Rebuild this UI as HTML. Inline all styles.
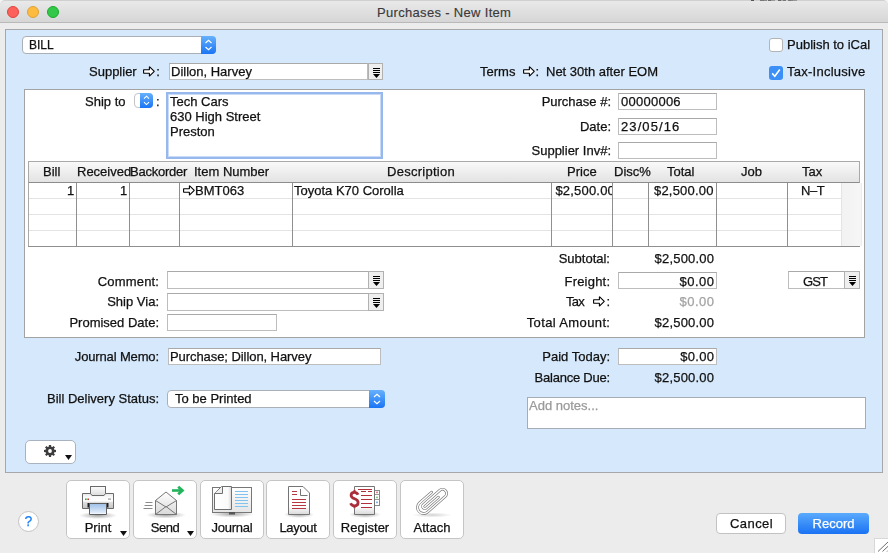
<!DOCTYPE html>
<html><head><meta charset="utf-8">
<style>
*{box-sizing:border-box;margin:0;padding:0}
html,body{width:888px;height:553px;overflow:hidden;background:#f4f4f4}
body{position:relative;font-family:"Liberation Sans",sans-serif;font-size:13px;color:#111;-webkit-font-smoothing:antialiased;-webkit-text-stroke:0.25px currentColor}
.a{position:absolute}
.t{position:absolute;white-space:nowrap;line-height:16px;font-size:13px}
.lb{position:absolute;white-space:nowrap;line-height:16px;font-size:13px;text-align:right;right:0}
#win{position:absolute;left:0;top:0;width:888px;height:553px;background:#ececec;border-radius:5px 5px 0 0;overflow:hidden}
#title{position:absolute;left:0;top:0;width:888px;height:23px;background:linear-gradient(#e9e9e9,#d6d6d6);border-bottom:1px solid #b9b9b9;border-top:1px solid #d0d0d0;border-radius:5px 5px 0 0}
.tl{position:absolute;top:6px;width:12px;height:12px;border-radius:50%}
#blue{position:absolute;left:5px;top:29px;width:878px;height:444px;background:#d6e8fb;border:1px solid #a5a7aa}
#white{position:absolute;left:24px;top:89px;width:841px;height:249px;background:#fff;border:1px solid #a3a3a3}
.inp{position:absolute;background:#fff;border:1px solid #bdbdbd;border-top-color:#a9a9a9}
.dd{position:absolute;background:#efefef;border:1px solid #b1b1b1}
.dd svg{position:absolute;left:4px;top:3px}
.step{position:absolute;background:linear-gradient(#66b1fc,#1a74f5)}
.btn{position:absolute;top:480px;width:64px;height:59px;background:#fff;border:1px solid #c5c5c5;border-radius:5px}
.btn .t{width:100%;text-align:center;left:0;top:39px}
.vline{position:absolute;top:183px;width:1px;height:63px;background:#8f8f8f}
.hline{position:absolute;left:29px;width:812px;height:1px;background:#e3e3e3}
</style></head><body>
<div id="win">
  <div id="title"></div>
  <div class="a" style="left:751px;top:0;width:46px;height:1px;background:linear-gradient(90deg,#555 0 6%,#cfcfcf 6% 20%,#777 20% 28%,#8a8a8a 28% 34%,#cfcfcf 34% 36%,#6a6a6a 36% 44%,#999 44% 52%,#cfcfcf 52% 58%,#666 58% 66%,#aaa 66% 70%,#777 70% 76%,#cfcfcf 76% 80%,#777 80% 86%,#888 86% 92%,#999 92% 100%)"></div>
  <div class="tl" style="left:7px;background:#fc605b;border:1px solid #e0443e"></div>
  <div class="tl" style="left:27px;background:#fdbc40;border:1px solid #dea236"></div>
  <div class="tl" style="left:47px;background:#34c84a;border:1px solid #1aab29"></div>
  <div class="t" style="left:377px;top:5px;color:#3a3a3a;letter-spacing:0.32px;-webkit-text-stroke:0.15px #3a3a3a">Purchases - New Item</div>

  <div id="content" style="position:absolute;left:0;top:0;width:888px;height:553px;will-change:transform">
  <div id="blue"></div>

  <!-- BILL popup -->
  <div class="a" style="left:22px;top:36px;width:194px;height:18px;background:#fff;border:1px solid #aab0b6;border-radius:4px"></div>
  <div class="step" style="left:201px;top:36px;width:15px;height:18px;border-radius:0 4px 4px 0"></div>
  <svg class="a" style="left:201px;top:36px" width="15" height="18"><path d="M4.5,7 L7.5,4.3 L10.5,7 M4.5,11 L7.5,13.7 L10.5,11" fill="none" stroke="#fff" stroke-width="1.2"/></svg>
  <div class="t" style="left:29px;top:37px;font-size:12px">BILL</div>

  <!-- checkboxes -->
  <div class="a" style="left:769px;top:38px;width:14px;height:14px;background:#fff;border:1px solid #b4b4b4;border-radius:3px"></div>
  <div class="t" style="left:787px;top:37px">Publish to iCal</div>
  <div class="a" style="left:769px;top:66px;width:14px;height:14px;background:#3b8ff6;border-radius:3px"></div>
  <svg class="a" style="left:769px;top:66px" width="14" height="14"><path d="M3.2,7.4 L5.8,10.2 L10.8,3.6" fill="none" stroke="#fff" stroke-width="1.6"/></svg>
  <div class="t" style="left:787px;top:64px;letter-spacing:0.25px">Tax-Inclusive</div>

  <!-- Supplier -->
  <div class="t" style="left:89px;top:64px">Supplier</div>
  <svg class="a" style="left:143.1px;top:65.9px" width="13" height="12"><path d="M0.6,3.7 H6.4 V0.7 L11.3,5.45 L6.4,10.2 V7.2 H0.6 Z" fill="#fff" stroke="#000" stroke-width="1.1" stroke-linejoin="bevel"/></svg>
  <div class="t" style="left:156.3px;top:64px">:</div>
  <div class="inp" style="left:169px;top:63px;width:199px;height:17px"></div>
  <div class="t" style="left:171px;top:64px">Dillon, Harvey</div>
  <div class="dd" style="left:368px;top:63px;width:15px;height:17px"><svg width="7" height="11"><rect x="0" y="1" width="7" height="1" fill="#000"/><rect x="0" y="3" width="7" height="1" fill="#000"/><rect x="0" y="5" width="7" height="1" fill="#000"/><path d="M0,7 H7 L3.5,11 Z" fill="#000"/></svg></div>

  <!-- Terms -->
  <div class="t" style="left:480px;top:64px">Terms</div>
  <svg class="a" style="left:523.05px;top:65.9px" width="13" height="12"><path d="M0.6,3.7 H6.4 V0.7 L11.3,5.45 L6.4,10.2 V7.2 H0.6 Z" fill="#fff" stroke="#000" stroke-width="1.1" stroke-linejoin="bevel"/></svg>
  <div class="t" style="left:535.6px;top:64px">:</div>
  <div class="t" style="left:546px;top:64px">Net 30th after EOM</div>

  <div id="white"></div>

  <!-- Ship to -->
  <div class="t" style="left:85px;top:94px">Ship to</div>
  <div class="a" style="left:134px;top:93px;width:19px;height:15px;background:#fff;border:1px solid #c4c4c4;border-radius:4px"></div>
  <div class="step" style="left:140px;top:93px;width:13px;height:15px;border-radius:0 4px 4px 0"></div>
  <svg class="a" style="left:140px;top:93px" width="13" height="15"><path d="M4,5.6 L6.5,3.2 L9,5.6 M4,9.2 L6.5,11.6 L9,9.2" fill="none" stroke="#fff" stroke-width="1.1"/></svg>
  <div class="t" style="left:156px;top:94px">:</div>
  <div class="a" style="left:166px;top:92px;width:217px;height:67px;background:#fff;border:2px solid #97b8ec;box-shadow:inset 0 0 0 1px #c9dbf6"></div>
  <div class="t" style="left:170px;top:94px">Tech Cars</div>
  <div class="t" style="left:170px;top:109px">630 High Street</div>
  <div class="t" style="left:170px;top:124px">Preston</div>

  <!-- Purchase # etc -->
  <div class="a" style="left:400px;top:0;width:211px;height:200px">
    <div class="lb" style="top:94px">Purchase #:</div>
    <div class="lb" style="top:119px">Date:</div>
    <div class="lb" style="top:143px">Supplier Inv#:</div>
  </div>
  <div class="inp" style="left:618px;top:93px;width:99px;height:17px"></div>
  <div class="t" style="left:621px;top:94px;letter-spacing:0.25px">00000006</div>
  <div class="inp" style="left:618px;top:118px;width:99px;height:17px"></div>
  <div class="t" style="left:621px;top:119px;letter-spacing:1.1px">23/05/16</div>
  <div class="inp" style="left:618px;top:142px;width:99px;height:17px"></div>

  <!-- Table -->
  <div class="a" style="left:28px;top:161px;width:832px;height:22px;background:linear-gradient(#f9f9f9,#e3e3e3);border-top:1px solid #a9a9a9;border-left:1px solid #a9a9a9;border-right:1px solid #a9a9a9;border-bottom:1px solid #8c8c8c"></div>
  <div class="a" style="left:28px;top:183px;width:1px;height:63px;background:#a9a9a9"></div>
  <div class="a" style="left:841px;top:183px;width:21px;height:63px;background:linear-gradient(90deg,#f2f2f2,#f6f6f6);border-left:1px solid #e4e4e4;border-right:1px solid #ececec"></div>
  <div class="a" style="left:28px;top:246px;width:832px;height:1px;background:#8f8f8f"></div>
  <div class="hline" style="top:198px"></div>
  <div class="hline" style="top:214px"></div>
  <div class="hline" style="top:230px"></div>
  <div class="vline" style="left:76px"></div>
  <div class="vline" style="left:129px"></div>
  <div class="vline" style="left:179px"></div>
  <div class="vline" style="left:292px"></div>
  <div class="vline" style="left:551px"></div>
  <div class="vline" style="left:612px"></div>
  <div class="vline" style="left:648px"></div>
  <div class="vline" style="left:716px"></div>
  <div class="vline" style="left:787px"></div>

  <div class="t" style="left:43px;top:164px">Bill</div>
  <div class="t" style="left:77px;top:164px">Received</div>
  <div class="t" style="left:130px;top:164px;letter-spacing:-0.25px">Backorder</div>
  <div class="t" style="left:194px;top:164px">Item Number</div>
  <div class="t" style="left:387px;top:164px;letter-spacing:0.26px">Description</div>
  <div class="t" style="left:567px;top:164px">Price</div>
  <div class="t" style="left:614px;top:164px">Disc%</div>
  <div class="t" style="left:667px;top:164px">Total</div>
  <div class="t" style="left:741px;top:164px">Job</div>
  <div class="t" style="left:802px;top:164px">Tax</div>

  <div class="t" style="left:67px;top:183px">1</div>
  <div class="t" style="left:120px;top:183px">1</div>
  <svg class="a" style="left:182.9px;top:185.1px" width="13" height="12"><path d="M0.6,3.7 H6.4 V0.7 L11.3,5.45 L6.4,10.2 V7.2 H0.6 Z" fill="#fff" stroke="#000" stroke-width="1.1" stroke-linejoin="bevel"/></svg>
  <div class="t" style="left:195px;top:183px">BMT063</div>
  <div class="t" style="left:294px;top:183px">Toyota K70 Corolla</div>
  <div class="a" style="left:552px;top:183px;width:60px;height:15px;overflow:hidden"><div class="t" style="left:3.4px;top:0;letter-spacing:0.2px">$2,500.00</div></div>
  <div class="t" style="left:654px;top:183px;letter-spacing:0.2px">$2,500.00</div>
  <div class="t" style="left:801px;top:183px;letter-spacing:-0.4px">N–T</div>

  <!-- lower left -->
  <div class="a" style="left:0;top:0;width:159px;height:340px">
    <div class="lb" style="top:274px;letter-spacing:0.2px;right:-0.2px">Comment:</div>
    <div class="lb" style="top:294px">Ship Via:</div>
    <div class="lb" style="top:315px">Promised Date:</div>
  </div>
  <div class="inp" style="left:167px;top:271px;width:202px;height:18px"></div>
  <div class="dd" style="left:368px;top:271px;width:16px;height:18px"><svg width="7" height="11"><rect x="0" y="1" width="7" height="1" fill="#000"/><rect x="0" y="3" width="7" height="1" fill="#000"/><rect x="0" y="5" width="7" height="1" fill="#000"/><path d="M0,7 H7 L3.5,11 Z" fill="#000"/></svg></div>
  <div class="inp" style="left:167px;top:293px;width:202px;height:18px"></div>
  <div class="dd" style="left:368px;top:293px;width:16px;height:18px"><svg width="7" height="11"><rect x="0" y="1" width="7" height="1" fill="#000"/><rect x="0" y="3" width="7" height="1" fill="#000"/><rect x="0" y="5" width="7" height="1" fill="#000"/><path d="M0,7 H7 L3.5,11 Z" fill="#000"/></svg></div>
  <div class="inp" style="left:167px;top:314px;width:110px;height:17px"></div>

  <!-- lower right -->
  <div class="a" style="left:400px;top:0;width:210px;height:400px">
    <div class="lb" style="top:251px">Subtotal:</div>
    <div class="lb" style="top:274px;letter-spacing:0.2px;right:-0.2px">Freight:</div>
    <div class="lb" style="top:315px;letter-spacing:0.38px;right:-0.38px">Total Amount:</div>
    <div class="lb" style="top:349px">Paid Today:</div>
    <div class="lb" style="top:370px;letter-spacing:-0.24px;right:0.24px">Balance Due:</div>
  </div>
  <div class="t" style="left:566px;top:294px;letter-spacing:-0.8px">Tax</div>
  <svg class="a" style="left:593px;top:296.1px" width="13" height="12"><path d="M0.6,3.7 H6.4 V0.7 L11.3,5.45 L6.4,10.2 V7.2 H0.6 Z" fill="#fff" stroke="#000" stroke-width="1.1" stroke-linejoin="bevel"/></svg>
  <div class="t" style="left:606.5px;top:294px">:</div>
  <div class="a" style="left:500px;top:0;width:214px;height:400px">
    <div class="lb" style="top:251px;letter-spacing:0.2px;right:-0.2px">$2,500.00</div>
    <div class="lb" style="top:294px;color:#a3a3a3;letter-spacing:0.5px;right:-0.5px">$0.00</div>
    <div class="lb" style="top:315px;letter-spacing:0.2px;right:-0.2px">$2,500.00</div>
  </div>
  <div class="inp" style="left:618px;top:272px;width:99px;height:17px"></div>
    <div class="a" style="left:500px;top:0;width:214px;height:400px">
    <div class="lb" style="top:274px;letter-spacing:0.5px;right:-0.5px">$0.00</div>
  </div>
  <div class="inp" style="left:788px;top:271px;width:57px;height:18px"></div>
  <div class="t" style="left:803px;top:274px;letter-spacing:-0.9px">GST</div>
  <div class="dd" style="left:844px;top:271px;width:16px;height:18px"><svg width="7" height="11"><rect x="0" y="1" width="7" height="1" fill="#000"/><rect x="0" y="3" width="7" height="1" fill="#000"/><rect x="0" y="5" width="7" height="1" fill="#000"/><path d="M0,7 H7 L3.5,11 Z" fill="#000"/></svg></div>

  <!-- memo -->
  <div class="a" style="left:0;top:0;width:159px;height:420px">
    <div class="lb" style="top:349px;letter-spacing:-0.15px;right:0.15px">Journal Memo:</div>
    <div class="lb" style="top:391px">Bill Delivery Status:</div>
  </div>
  <div class="inp" style="left:168px;top:348px;width:213px;height:17px"></div>
  <div class="t" style="left:170px;top:349px;letter-spacing:-0.07px">Purchase; Dillon, Harvey</div>
  <div class="a" style="left:167px;top:390px;width:218px;height:18px;background:#fff;border:1px solid #aab0b6;border-radius:4px"></div>
  <div class="step" style="left:369px;top:390px;width:16px;height:18px;border-radius:0 4px 4px 0"></div>
  <svg class="a" style="left:369px;top:390px" width="16" height="18"><path d="M5,7 L8,4.3 L11,7 M5,11 L8,13.7 L11,11" fill="none" stroke="#fff" stroke-width="1.2"/></svg>
  <div class="t" style="left:175px;top:391px">To be Printed</div>

  <div class="inp" style="left:618px;top:348px;width:99px;height:17px"></div>
  <div class="a" style="left:500px;top:0;width:214px;height:400px">
    <div class="lb" style="top:349px;letter-spacing:0.3px;right:-0.3px">$0.00</div>
    <div class="lb" style="top:370px;letter-spacing:0.2px;right:-0.2px">$2,500.00</div>
  </div>

  <div class="inp" style="left:527px;top:397px;width:339px;height:32px;border-color:#a4acb6"></div>
  <div class="t" style="left:529px;top:398px;color:#9a9a9a">Add notes...</div>

  <!-- gear -->
  <div class="a" style="left:25px;top:440px;width:51px;height:24px;background:#fff;border:1px solid #a9b3bf;border-radius:5px"></div>
  <svg class="a" style="left:43px;top:444px" width="14" height="14" viewBox="0 0 14 14"><g fill="#3d3d3d"><circle cx="7" cy="7" r="4.6"/><rect x="5.9" y="1" width="2.2" height="12"/><rect x="1" y="5.9" width="12" height="2.2"/><rect x="5.9" y="1" width="2.2" height="12" transform="rotate(45 7 7)"/><rect x="5.9" y="1" width="2.2" height="12" transform="rotate(-45 7 7)"/></g><circle cx="7" cy="7" r="1.9" fill="#fff"/></svg>
  <svg class="a" style="left:65px;top:455px" width="7" height="5"><path d="M0,0 H7 L3.5,5 Z" fill="#111"/></svg>

  <!-- help -->
  <div class="a" style="left:18px;top:511px;width:21px;height:21px;background:#fff;border:1px solid #c3c3c3;border-radius:50%"></div>
  <div class="t" style="left:18px;top:513px;width:21px;text-align:center;color:#1a7ff7;font-size:14px">?</div>

  <!-- toolbar -->
  <div class="btn" style="left:66px"><div class="t">Print</div></div>
  <svg class="a" style="left:120px;top:531px" width="7" height="5"><path d="M0,0 H7 L3.5,5 Z" fill="#111"/></svg>
  <div class="btn" style="left:133px"><div class="t" style="letter-spacing:-0.5px">Send</div></div>
  <svg class="a" style="left:187px;top:531px" width="7" height="5"><path d="M0,0 H7 L3.5,5 Z" fill="#111"/></svg>
  <div class="btn" style="left:200px;width:64px"><div class="t" style="letter-spacing:-0.25px">Journal</div></div>
  <div class="btn" style="left:266px"><div class="t" style="letter-spacing:-0.3px">Layout</div></div>
  <div class="btn" style="left:333px"><div class="t">Register</div></div>
  <div class="btn" style="left:400px;width:64px"><div class="t">Attach</div></div>


  <!-- toolbar icons -->
  <svg class="a" style="left:67px;top:480px" width="64" height="40" viewBox="67 480 64 40">
    <defs>
      <radialGradient id="shd" cx="0.5" cy="0.5" r="0.5"><stop offset="0" stop-color="#000" stop-opacity="0.35"/><stop offset="1" stop-color="#000" stop-opacity="0"/></radialGradient>
      <linearGradient id="pg" x1="0" y1="0" x2="0" y2="1"><stop offset="0" stop-color="#fdfdfd"/><stop offset="1" stop-color="#dcdcdc"/></linearGradient>
      <linearGradient id="bodyg" x1="0" y1="0" x2="0" y2="1"><stop offset="0" stop-color="#e8e8e8"/><stop offset="0.25" stop-color="#fafafa"/><stop offset="0.5" stop-color="#ffffff"/><stop offset="0.6" stop-color="#dedede"/><stop offset="1" stop-color="#c4c4c4"/></linearGradient>
      <linearGradient id="blueg" x1="0" y1="0" x2="0" y2="1"><stop offset="0" stop-color="#9dbfea"/><stop offset="0.8" stop-color="#dce9f8"/><stop offset="1" stop-color="#ffffff"/></linearGradient>
    </defs>
    <ellipse cx="98" cy="515.5" rx="19" ry="3.5" fill="url(#shd)"/>
    <rect x="90.5" y="486.5" width="15" height="9" fill="url(#pg)" stroke="#6a6a6a"/>
    <path d="M82.5,493.5 H90.5 L92,495.5 H104 L105.5,493.5 H113.5 V508.5 H82.5 Z" fill="url(#bodyg)" stroke="#6a6a6a"/>
    <rect x="87.5" y="503" width="21" height="4.5" fill="#1e1e1e"/>
    <path d="M89.5,503.5 H106.5 V514.5 H89.5 Z" fill="url(#blueg)" stroke="#5f5f5f"/>
    <rect x="85" y="498.5" width="1.6" height="1.6" fill="#2aa84a"/>
    <rect x="87.4" y="498.5" width="1.6" height="1.6" fill="#d83030"/>
    <rect x="108" y="498.5" width="3" height="1.2" fill="#999"/>
  </svg>
  <svg class="a" style="left:134px;top:480px" width="64" height="40" viewBox="134 480 64 40">
    <defs><linearGradient id="envg" x1="0" y1="0" x2="0" y2="1"><stop offset="0" stop-color="#ffffff"/><stop offset="1" stop-color="#d9d9d9"/></linearGradient></defs>
    <ellipse cx="166" cy="515" rx="20" ry="3.5" fill="url(#shd)"/>
    <path d="M155.5,500.5 L166,492 L176.5,500.5 V514.5 H155.5 Z" fill="url(#envg)" stroke="#767676" stroke-width="1"/>
    <path d="M155.5,500.5 L166,507 L176.5,500.5 M155.5,514.5 L166,506.5 L176.5,514.5" fill="none" stroke="#767676" stroke-width="1"/>
    <path d="M145.5,502.5 H152.5 M144.5,505.5 H152.5 M143.5,508.5 H152.5" stroke="#8a8a8a" stroke-width="1"/>
    <path d="M172,490.5 H181" stroke="#22b35c" stroke-width="2.6"/>
    <path d="M178.2,486.8 L182.4,490.5 L178.2,494.2" fill="none" stroke="#22b35c" stroke-width="2.8" stroke-linejoin="miter"/>
  </svg>
  <svg class="a" style="left:201px;top:480px" width="63" height="40" viewBox="201 480 63 40">
    <defs><linearGradient id="rpg" x1="0" y1="0" x2="0" y2="1"><stop offset="0" stop-color="#ffffff"/><stop offset="1" stop-color="#e4e4e4"/></linearGradient>
    <linearGradient id="lpg" x1="0" y1="0" x2="1" y2="0"><stop offset="0" stop-color="#ffffff"/><stop offset="0.8" stop-color="#fafafa"/><stop offset="1" stop-color="#d6d6d6"/></linearGradient></defs>
    <ellipse cx="232" cy="514" rx="22" ry="3.5" fill="url(#shd)"/>
    <rect x="212.5" y="487.5" width="39" height="25" fill="url(#rpg)" stroke="#777"/>
    <path d="M214.5,493.5 L221.5,486.5 H231.5 V509.5 H214.5 Z" fill="url(#lpg)" stroke="#6f6f6f"/>
    <path d="M214.5,493.5 H222.5 V486.5" fill="#eeeeee" stroke="#6f6f6f"/>
    <g stroke="#7fc3ee" stroke-width="1"><path d="M235,491.5 H248 M235,494.5 H248 M235,497.5 H248 M235,500.5 H248 M235,503.5 H248 M235,506.5 H248"/></g>
    <rect x="229" y="512" width="6" height="2.5" fill="#555"/>
  </svg>
  <svg class="a" style="left:267px;top:480px" width="64" height="40" viewBox="267 480 64 40">
    <defs><linearGradient id="lyg" x1="0" y1="0" x2="0" y2="1"><stop offset="0" stop-color="#ffffff"/><stop offset="0.7" stop-color="#ffffff"/><stop offset="1" stop-color="#d9d9d9"/></linearGradient></defs>
    <ellipse cx="299" cy="514.5" rx="15" ry="3.5" fill="url(#shd)"/>
    <path d="M288.5,486.5 H303 L309.5,493 V514.5 H288.5 Z" fill="url(#lyg)" stroke="#747474"/>
    <path d="M300.5,489 V495.5 H307.5" fill="none" stroke="#747474"/>
    <g stroke="#b63642" stroke-width="1"><path d="M292,491.5 H297 M292,494.5 H297 M292,499.5 H306 M292,502.5 H306 M292,505.5 H306 M292,508.5 H306"/></g>
  </svg>
  <svg class="a" style="left:334px;top:480px" width="64" height="40" viewBox="334 480 64 40">
    <ellipse cx="365" cy="514.5" rx="16" ry="3.5" fill="url(#shd)"/>
    <rect x="374.5" y="490.5" width="5" height="15" fill="#fff" stroke="#888"/>
    <path d="M374.5,494.5 H379.5 M374.5,499.5 H379.5" stroke="#999"/>
    <rect x="376.4" y="491.6" width="1.2" height="1.6" fill="#c23a3a"/>
    <rect x="376.4" y="496.6" width="1.2" height="1.6" fill="#3aa648"/>
    <rect x="376.4" y="501.6" width="1.2" height="1.6" fill="#2f7bd8"/>
    <path d="M354.5,486.5 H374.5 V514.5 H354.5 Z" fill="url(#lyg)" stroke="#747474"/>
    <g stroke="#b0303b" stroke-width="1"><path d="M358,489.5 H372 M361,491.5 H366 M368,491.5 H372 M361,495.5 H372 M361,499.5 H372 M361,503.5 H372 M361,507.5 H372"/></g>
    <rect x="352.5" y="490" width="4" height="18" fill="#fff"/>
    <path d="M358,494.8 C357.2,493 355.9,492.3 354.4,492.3 C352.3,492.3 351.1,493.6 351.1,495.3 C351.1,497.4 353,498.2 354.6,498.8 C356.6,499.5 358.1,500.4 358.1,502.6 C358.1,504.6 356.5,505.9 354.4,505.9 C352.6,505.9 351.3,505 350.6,503.3 M354.5,489.8 V493 M354.5,505 V508.2" fill="none" stroke="#fff" stroke-width="4.4"/>
    <path d="M358,494.8 C357.2,493 355.9,492.3 354.4,492.3 C352.3,492.3 351.1,493.6 351.1,495.3 C351.1,497.4 353,498.2 354.6,498.8 C356.6,499.5 358.1,500.4 358.1,502.6 C358.1,504.6 356.5,505.9 354.4,505.9 C352.6,505.9 351.3,505 350.6,503.3" fill="none" stroke="#aa2f3a" stroke-width="2.8"/>
    <path d="M354.5,489.8 V493 M354.5,505 V508.2" stroke="#aa2f3a" stroke-width="2"/>
  </svg>
  <svg class="a" style="left:401px;top:480px" width="63" height="40" viewBox="401 480 63 40">
    <ellipse cx="432" cy="515" rx="20" ry="2.5" fill="url(#shd)" opacity="0.5"/>
    <g transform="translate(423.6,507.4) rotate(-41.4)">
      <path d="M16,-6.1 H0 A6.1,6.1 0 0 0 0,6.1 H23.4 A4.1,4.1 0 0 0 23.4,-2.1 H1.5 A2.1,2.1 0 0 0 1.5,2.1 H17.8" fill="none" stroke="#767676" stroke-width="2.8" stroke-linecap="round"/>
      <path d="M16,-6.1 H0 A6.1,6.1 0 0 0 0,6.1 H23.4 A4.1,4.1 0 0 0 23.4,-2.1 H1.5 A2.1,2.1 0 0 0 1.5,2.1 H17.8" fill="none" stroke="#fff" stroke-width="1.5" stroke-linecap="round"/>
    </g>
  </svg>
  <div class="a" style="left:874px;top:538px;width:20px;height:20px;background:#fff;border:1px solid #d8d8d8"></div>
  <svg class="a" style="left:874px;top:538px" width="14" height="15"><path d="M4,13.5 L14,4 M8.5,13.5 L14,8.3 M13,13.5 L14,12.5" stroke="#6e6e6e" stroke-width="1"/></svg>
  <!-- Cancel / Record -->
  <div class="a" style="left:716px;top:513px;width:70px;height:21px;background:#fff;border:1px solid #c2c2c2;border-radius:4px"></div>
  <div class="t" style="left:730px;top:516px;letter-spacing:0.44px">Cancel</div>
  <div class="a" style="left:798px;top:513px;width:71px;height:21px;background:linear-gradient(#5aaafd,#1a72f3);border-radius:4px"></div>
  <div class="t" style="left:798px;top:516px;width:71px;text-align:center;color:#fff">Record</div>
</div>
</div>
</body></html>
